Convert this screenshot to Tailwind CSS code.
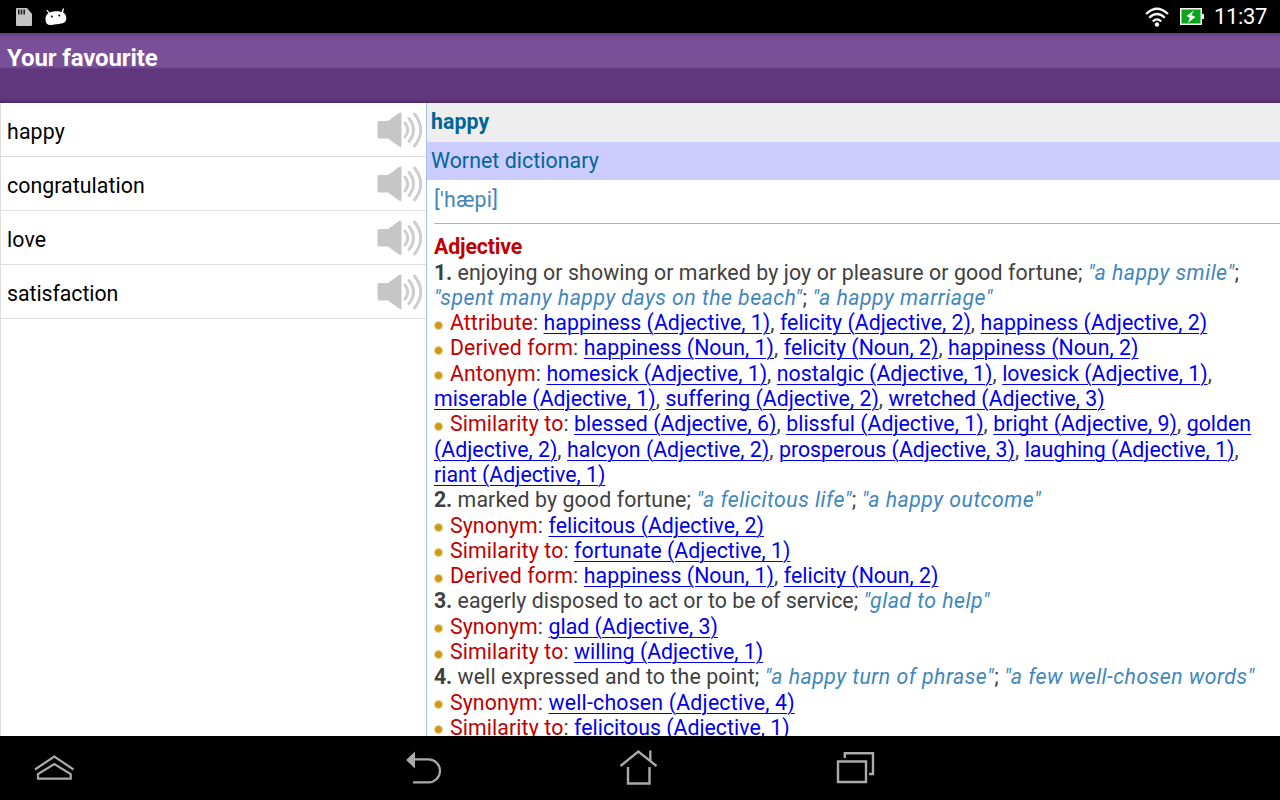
<!DOCTYPE html>
<html lang="en"><head><meta charset="utf-8"><title>Your favourite</title>
<script src="https://cdn.jsdelivr.net/npm/@tailwindcss/browser@4"></script></head>
<body class="w-[1280px] h-[800px] overflow-hidden bg-white font-['Roboto',sans-serif] flex flex-col">
<header class="h-[33px] shrink-0 bg-black text-white flex items-center justify-between pl-4 pr-[13px]">
<div class="flex items-center gap-[13px]">
<svg class="w-4 h-[18px]" viewBox="0 0 16 18"><path d="M1 0h10l5 6v11q0 1-1 1H1q-1 0-1-1V1q0-1 1-1z" fill="#c4c4c4"/><path d="M2.800 1.500v5M5.500 1.500v5M8.200 1.500v5" stroke="#222" stroke-width="1.600"/></svg>
<svg class="w-[22px] h-[18px]" viewBox="0 0 22 18"><path d="M2 2l2.500 4M18.500 .5l-1.500 5" stroke="#fff" stroke-width="1.300"/><path d="M.5 11.500C.3 6.500 4 3.500 10.500 3.300c6.500-.3 10.500 1.700 10.800 6.200.2 4.500-2.300 5.800-6.300 6.300-2 .2-5 .8-8 1.200C3 17.500.7 16 .5 11.500z" fill="#fff"/><circle cx="6.800" cy="8.500" r="1" fill="#000"/><circle cx="14.300" cy="7.600" r="1" fill="#000"/></svg>
</div>
<div class="flex items-center">
<svg class="w-6 h-5 mr-[11px]" viewBox="0 0 24 20" fill="none" stroke="#f4f4f4" stroke-width="2.300"><path d="M1 7q11-10.500 22 0M4.200 10.800q7.800-7.600 15.600 0M7.700 14.500q4.300-4.200 8.600 0"/><circle cx="12" cy="17.500" r="2.200" fill="#f4f4f4" stroke="none"/></svg>
<svg class="w-6 h-[17px] mr-[10px]" viewBox="0 0 24 17"><path d="M0 0h22v6h2v5h-2v6H0z" fill="#f4f4f4"/><path d="M1.500 1.500h19v14h-19z" fill="#0ba51c"/><path d="M14 2.500L6.500 8l3.500 2-2.500 5 8-6-4-2z" fill="#fff"/></svg>
<span class="text-[22px] leading-[31px] tracking-[-.35px] -mt-px">11:37</span></div>
</header>
<div class="h-[70px] shrink-0 bg-[linear-gradient(#5d3b7c_0px,#724892_3px,#794f97_6px,#794f97_34px,#6b4189_35px,#60377d_36px,#60377d_66px,#4b2a65_70px)] text-white font-bold text-[24px] leading-[28px] pl-[7px] pt-[11px]"><span class="tracking-[-.13px]">Your favourite</span></div>
<main class="h-[633px] shrink-0 flex overflow-hidden">
<section class="w-[426px] shrink-0 border-l border-[#ddd] text-[21.300px] text-black">
<div class="h-[54px] border-b border-[#ddd] flex items-center justify-between pl-[6px] pr-1 pt-[5px]"><span class="tracking-[.15px]">happy</span><svg class="w-[46px] h-9 -mt-[5px]" viewBox="0 0 46 36"><use href="#speaker"/></svg></div>
<div class="h-[54px] border-b border-[#ddd] flex items-center justify-between pl-[6px] pr-1 pt-[5px]"><span class="tracking-[.06px]">congratulation</span><svg class="w-[46px] h-9 -mt-[5px]" viewBox="0 0 46 36"><use href="#speaker"/></svg></div>
<div class="h-[54px] border-b border-[#ddd] flex items-center justify-between pl-[6px] pr-1 pt-[5px]"><span class="tracking-[.15px]">love</span><svg class="w-[46px] h-9 -mt-[5px]" viewBox="0 0 46 36"><use href="#speaker"/></svg></div>
<div class="h-[54px] border-b border-[#ddd] flex items-center justify-between pl-[6px] pr-1 pt-[5px]"><span class="tracking-[-.05px]">satisfaction</span><svg class="w-[46px] h-9 -mt-[5px]" viewBox="0 0 46 36"><use href="#speaker"/></svg></div>
</section>
<section class="flex-1 min-w-0 border-l border-[#a3c5ee] text-[21.300px]">
<div class="h-[39px] bg-[#eee] text-[#069] font-bold pl-1 leading-[38px] tracking-[.1px]">happy</div>
<div class="h-[38px] bg-[#ccf] text-[#069] pl-1 leading-[37px] tracking-[.07px]">Wornet dictionary</div>
<div class="ml-[7px] h-[43px] text-[#4187bb] leading-[39px] tracking-[.35px]">['hæpi]</div>
<div class="ml-[7px] h-px bg-[#80c0f5]"></div>
<div class="ml-[7px] pt-[10.300px] leading-[25.300px] whitespace-nowrap tracking-[.11px] text-[#404040] [&_a]:text-[#0000ee] [&_a]:tracking-[.01px] [&_a]:underline [&_a]:underline-offset-[2.500px] [&_a]:decoration-[1.300px] [&_i]:text-[#4187bb] [&_i]:tracking-[.47px] [&_em]:not-italic [&_em]:text-[#c00000] [&_s]:inline-block [&_s]:w-[9px] [&_s]:h-[9px] [&_s]:rounded-full [&_s]:bg-[#cc9a18] [&_s]:border [&_s]:border-[#e7cf91] [&_s]:mr-[1.500px] [&_s]:align-[.500px] [&_u]:tracking-[.03px] [&_u]:no-underline">
<div class="font-bold text-[#c00000] tracking-[-.15px]">Adjective</div>
<div><b class="tracking-[-.1px]">1.</b> enjoying or showing or marked by joy or pleasure or good fortune; <i>"a happy smile"</i>;</div>
<div><i>"spent many happy days on the beach"</i>; <i>"a happy marriage"</i></div>
<div><s></s> <em>Attribute</em>: <a><u>happiness (Adjective, 1)</u></a>, <a>felicity (Adjective, 2)</a>, <a><u>happiness (Adjective, 2)</u></a></div>
<div><s></s> <em>Derived form</em>: <a><u>happiness (Noun, 1)</u></a>, <a>felicity (Noun, 2)</a>, <a><u>happiness (Noun, 2)</u></a></div>
<div><s></s> <em>Antonym</em>: <a>homesick (Adjective, 1)</a>, <a>nostalgic (Adjective, 1)</a>, <a>lovesick (Adjective, 1)</a>,</div>
<div><a>miserable (Adjective, 1)</a>, <a>suffering (Adjective, 2)</a>, <a>wretched (Adjective, 3)</a></div>
<div><s></s> <em>Similarity to</em>: <a>blessed (Adjective, 6)</a>, <a>blissful (Adjective, 1)</a>, <a>bright (Adjective, 9)</a>, <a>golden</a></div>
<div><a>(Adjective, 2)</a>, <a>halcyon (Adjective, 2)</a>, <a>prosperous (Adjective, 3)</a>, <a>laughing (Adjective, 1)</a>,</div>
<div><a>riant (Adjective, 1)</a></div>
<div><b class="tracking-[-.1px]">2.</b> marked by good fortune; <i>"a felicitous life"</i>; <i>"a happy outcome"</i></div>
<div><s></s> <em>Synonym</em>: <a>felicitous (Adjective, 2)</a></div>
<div><s></s> <em>Similarity to</em>: <a>fortunate (Adjective, 1)</a></div>
<div><s></s> <em>Derived form</em>: <a><u>happiness (Noun, 1)</u></a>, <a>felicity (Noun, 2)</a></div>
<div><b class="tracking-[-.1px]">3.</b> <span class="tracking-[.03px]">eagerly disposed to act or to be of service;</span> <i>"glad to help"</i></div>
<div><s></s> <em>Synonym</em>: <a>glad (Adjective, 3)</a></div>
<div><s></s> <em>Similarity to</em>: <a>willing (Adjective, 1)</a></div>
<div><b class="tracking-[-.1px]">4.</b> well expressed and to the point; <i>"a happy turn of phrase"</i>; <i>"a few well-chosen words"</i></div>
<div><s></s> <em>Synonym</em>: <a><span class="tracking-[.2px]">well-chosen (Adjective, 4)</span></a></div>
<div><s></s> <em>Similarity to</em>: <a>felicitous (Adjective, 1)</a></div>
</div>
</section>
</main>
<nav class="h-16 shrink-0 bg-black flex items-center pl-[34px]">
<svg class="w-10 h-16 mr-[332px]" viewBox="34 0 40 64" fill="none" stroke="#aaa" stroke-width="2.200"><path d="M35 33.500L54.300 20.500 73.500 33.500M38 42.700V38L54.300 28 70.700 38v4.700z"/></svg>
<svg class="w-9 h-16 mr-[178px]" viewBox="406 0 36 64" fill="none" stroke="#aaa" stroke-width="2.200"><path d="M413 23.300h15.500a11.500 11.500 0 0 1 0 23H413"/><path d="M406 24l9-8.500v17z" fill="#aaa" stroke="none"/></svg>
<svg class="w-[38px] h-16 mr-[178px]" viewBox="620 0 38 64" fill="none" stroke="#aaa" stroke-width="2.400"><path d="M620.500 30L638.300 15.500 656.500 30M650.300 14.500v10M628 31v16.500h21.500V31"/></svg>
<svg class="w-10 h-16" viewBox="836 0 40 64" fill="none" stroke="#aaa" stroke-width="2.400"><path d="M838 25.500h28v20.500h-28zM844.800 22v-4.700h28.200V38h-4"/></svg>
</nav>
<svg class="hidden"><defs><g id="speaker"><path d="M1.500 10.500q0-1.500 1.500-1.500h9L23 1q2.500-1.500 2.500 1v32q0 2-2.500.5L12 26.500H3q-1.500 0-1.500-1.500z" fill="#c6c6c6"/><path d="M29 11q5.500 7 0 14M33 6.500q9 11.500 0 23M38.500 2q12.500 16 0 32" stroke="#cecece" stroke-width="3" stroke-linecap="round" fill="none"/></g></defs></svg>
</body></html>
